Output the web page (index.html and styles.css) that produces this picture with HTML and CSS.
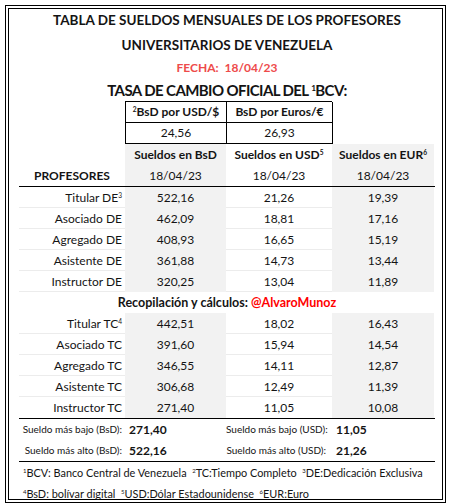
FILE: index.html
```html
<!DOCTYPE html>
<html lang="es">
  <head>
    <meta charset="UTF-8" />
    <meta name="viewport" content="width=device-width, initial-scale=1.0" />
    <title>Sueldos Profesores</title>
    <link rel="stylesheet" href="styles.css">
  </head>
  <body>
    <div class="sheet">
      <h1 class="title">TABLA DE SUELDOS MENSUALES DE LOS PROFESORES</h1>
      <h1 class="title second">UNIVERSITARIOS DE VENEZUELA</h1>
      <p class="fecha">FECHA:&nbsp; 18/04/23</p>
      <h2 class="tasa">TASA DE CAMBIO OFICIAL DEL <sup>1</sup>BCV:</h2>

      <div class="rates">
        <div class="rate-cell bold"><sup>2</sup>BsD por USD/$</div>
        <div class="rate-cell bold">BsD por Euros/€</div>
        <div class="rate-cell">24,56</div>
        <div class="rate-cell">26,93</div>
      </div>

      <div class="grid head">
        <div class="cell"></div>
        <div class="cell grey bold">Sueldos en BsD</div>
        <div class="cell bold">Sueldos en USD<sup>5</sup></div>
        <div class="cell grey bold">Sueldos en EUR<sup>6</sup></div>
        <div class="cell bold label-head">PROFESORES</div>
        <div class="cell grey">18/04/23</div>
        <div class="cell">18/04/23</div>
        <div class="cell grey">18/04/23</div>
      </div>

      <div class="grid body" id="de-rows"></div>

      <div class="credit">Recopilación y cálculos: <span class="red">@AlvaroMunoz</span></div>

      <div class="grid body last" id="tc-rows"></div>

      <div class="summary">
        <div class="sum-label">Sueldo más bajo (BsD):</div>
        <div class="sum-val">271,40</div>
        <div class="sum-label">Sueldo más bajo (USD):</div>
        <div class="sum-val">11,05</div>
        <div class="sum-label">Sueldo más alto (BsD):</div>
        <div class="sum-val">522,16</div>
        <div class="sum-label">Sueldo más alto (USD):</div>
        <div class="sum-val">21,26</div>
      </div>

      <div class="notes">
        <p><sup>1</sup>BCV: Banco Central de Venezuela&nbsp; <sup>2</sup>TC:Tiempo Completo&nbsp; <sup>3</sup>DE:Dedicación Exclusiva</p>
        <p><sup>4</sup>BsD: bolívar digital&nbsp; <sup>5</sup>USD:Dólar Estadounidense&nbsp; <sup>6</sup>EUR:Euro</p>
      </div>
    </div>

    <script>
      const DE = [
        ["Titular DE", "3", "522,16", "21,26", "19,39"],
        ["Asociado DE", "", "462,09", "18,81", "17,16"],
        ["Agregado DE", "", "408,93", "16,65", "15,19"],
        ["Asistente DE", "", "361,88", "14,73", "13,44"],
        ["Instructor DE", "", "320,25", "13,04", "11,89"],
      ];
      const TC = [
        ["Titular TC", "4", "442,51", "18,02", "16,43"],
        ["Asociado TC", "", "391,60", "15,94", "14,54"],
        ["Agregado TC", "", "346,55", "14,11", "12,87"],
        ["Asistente TC", "", "306,68", "12,49", "11,39"],
        ["Instructor TC", "", "271,40", "11,05", "10,08"],
      ];

      function fillRows(id, rows) {
        const box = document.querySelector(id);
        rows.forEach((r) => {
          const sup = r[1] ? `<sup>${r[1]}</sup>` : "";
          box.innerHTML += `<div class="cell label">${r[0]}${sup}</div>
            <div class="cell grey">${r[2]}</div>
            <div class="cell line">${r[3]}</div>
            <div class="cell grey">${r[4]}</div>`;
        });
      }

      fillRows("#de-rows", DE);
      fillRows("#tc-rows", TC);
    </script>
  </body>
</html>
```

FILE: styles.css
```css
body {
  margin: 0;
  font-family: Lato, "Open Sans", sans-serif;
  color: #141414;
  background: white;
}

.sheet {
  margin: 5px 0 0 5px;
  width: 441px;
  height: 498px;
  box-sizing: border-box;
  border: 4px double #000;
  padding: 1px 7px 0 10px;
  white-space: nowrap;
}

sup {
  font-size: 0.55em;
  line-height: 0;
  vertical-align: 0.6em;
}

.bold {
  font-weight: bold;
}

.title {
  margin: 0;
  font-size: 13.5px;
  font-weight: bold;
  text-align: center;
  line-height: 20px;
  height: 20px;
}

.title.second {
  margin-top: 5px;
}

.fecha {
  margin: 4px 0 0;
  font-size: 12px;
  font-weight: bold;
  color: #ee4b4b;
  text-align: center;
  line-height: 18px;
}

.tasa {
  margin: 2px 0 0;
  font-size: 15px;
  letter-spacing: -0.6px;
  font-weight: bold;
  text-align: center;
  line-height: 22px;
}

.rates {
  display: grid;
  grid-template-columns: 101px 106px;
  margin-left: 106px;
  width: 207px;
  border-top: 1px solid #000;
  border-left: 1px solid #000;
  box-sizing: border-box;
}

.rate-cell {
  height: 21px;
  line-height: 20px;
  font-size: 12px;
  text-align: center;
  border-right: 1px solid #000;
  border-bottom: 1px solid #000;
  box-sizing: border-box;
}

.grid {
  display: grid;
  grid-template-columns: 106px 101px 106px 102px;
}

.cell {
  height: 21px;
  line-height: 21px;
  font-size: 12px;
  text-align: center;
  box-sizing: border-box;
}

.grey {
  background: #f2f2f2;
}

.head {
  border-bottom: 1px solid #000;
}

.head .label-head {
  text-align: center;
}

.cell.label {
  text-align: right;
  padding-right: 3px;
}

.body .label,
.body .line {
  border-bottom: 1px solid #ececec;
}

.body.last {
  border-bottom: 1px solid #000;
}

.body.last .cell:nth-last-child(-n + 4) {
  border-bottom: none;
}

.credit {
  height: 21px;
  line-height: 21px;
  font-size: 12.5px;
  font-weight: bold;
  text-align: center;
}

.red {
  color: #ff0000;
}

.summary {
  display: grid;
  grid-template-columns: 106px 101px 106px 102px;
  border-bottom: 1px solid #000;
}

.sum-label {
  height: 21px;
  line-height: 21px;
  font-size: 10px;
  text-align: right;
  padding-right: 3px;
}

.sum-label:nth-child(3),
.sum-label:nth-child(7) {
  padding-right: 6px;
}

.sum-val {
  height: 21px;
  line-height: 21px;
  font-size: 12px;
  font-weight: bold;
  padding-left: 4px;
}

.notes p {
  margin: 0;
  height: 21px;
  line-height: 21px;
  font-size: 10.9px;
  padding-left: 4px;
}
```
